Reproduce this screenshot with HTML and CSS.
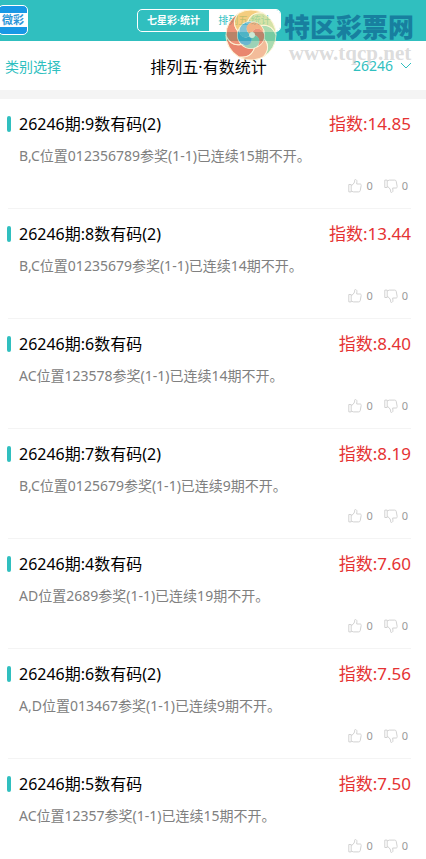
FILE: index.html
```
<!DOCTYPE html>
<html lang="zh-CN">
<head>
<meta charset="utf-8">
<meta name="viewport" content="width=device-width, initial-scale=1">
<title>排列五·有数统计</title>
<link rel="stylesheet" href="styles.css">
</head>
<body>
<svg class="sprite" aria-hidden="true">
  <symbol id="thumb" viewBox="0 0 14 14">
    <path d="M.8 5.5h2.4v7.4H.8zM3.2 6.6 5 5.4 6.6 3V1.3C6.6.7 7 .5 7.6.6c1 .2 1.4 1 1.3 2L8.7 5h3.2c1 0 1.5.6 1.3 1.5l-1 5.2c-.2.8-.7 1.2-1.5 1.2H5.4l-2.2-.8" fill="none" stroke="currentColor" stroke-linejoin="round"/>
  </symbol>
</svg>
<header class="topbar">
  <a class="logo" href="#" aria-label="首页"><span>微彩</span></a>
  <nav class="tabs">
    <a class="tab" href="#">七星彩·统计</a>
    <a class="tab tab-active" href="#">排列五·统计</a>
  </nav>
  <div class="watermark">
    <svg class="swirl" viewBox="0 0 52 52" aria-hidden="true">
      <defs>
        <path id="blade" d="M26 26C30 14 46 12 51 26A25 25 0 0 1 38.5 47.65C48.1 36.3 38.4 23.5 26 26Z"/>
        <path id="petal" d="M26 26C28 18 36 17 39 25C40 30 37 35 33 37C36 31 33 25 26 26Z"/>
      </defs>
      <g stroke="#fff3cd" stroke-width="1">
        <use href="#blade" fill="#8fcf97"/>
        <use href="#blade" fill="#efa679" transform="rotate(60 26 26)"/>
        <use href="#blade" fill="#e2603f" transform="rotate(120 26 26)"/>
        <use href="#blade" fill="#e9704b" transform="rotate(180 26 26)"/>
        <use href="#blade" fill="#f1bd55" transform="rotate(240 26 26)"/>
        <use href="#blade" fill="#c9d98a" transform="rotate(300 26 26)"/>
      </g>
      <circle cx="26" cy="26" r="14" fill="#f8efcb"/>
      <use href="#petal" fill="#e8714f"/>
      <use href="#petal" fill="#7cc3a0" transform="rotate(72 26 26)"/>
      <use href="#petal" fill="#3c9fc0" transform="rotate(144 26 26)"/>
      <use href="#petal" fill="#58b0c8" transform="rotate(216 26 26)"/>
      <use href="#petal" fill="#ee9a5e" transform="rotate(288 26 26)"/>
      <circle cx="27" cy="26" r="3" fill="#fff6dc"/>
    </svg>
    <p class="brand"><strong>特区彩票网</strong><span>www.tqcp.net</span></p>
  </div>
</header>
<div class="filters">
  <a class="category" href="#">类别选择</a>
  <h1>排列五·有数统计</h1>
  <button class="issue" type="button">26246
    <svg viewBox="0 0 12 8" aria-hidden="true"><path d="M1 1l5 5 5-5" fill="none" stroke="currentColor"/></svg>
  </button>
</div>
<main class="list" id="list"></main>
<script src="app.js"></script>
</body>
</html>
```
FILE: styles.css
```
* { box-sizing: border-box; }

body {
  margin: 0;
  background: #fff;
  color: #000;
  font-family: "Noto Sans", "Noto Sans CJK SC", sans-serif;
  font-size: 14px;
  overflow-x: hidden;
}

a { color: inherit; text-decoration: none; }
h1, h2, p { margin: 0; font-weight: 400; }
button { padding: 0; border: 0; background: none; color: inherit; font: inherit; }
.sprite { position: absolute; width: 0; height: 0; }

.topbar {
  position: relative;
  display: flex;
  align-items: center;
  justify-content: center;
  height: 41px;
  background: #30bfbf;
}

.logo {
  position: absolute;
  left: -2px;
  top: 5px;
  display: flex;
  align-items: center;
  width: 30px;
  height: 30px;
  border: 1px solid #fff;
  border-radius: 5px;
  background: #1898e5;
  overflow: hidden;
}

.logo span {
  width: 100%;
  height: 14px;
  background: #fff;
  color: #2f97d8;
  font-size: 11px;
  font-weight: 700;
  line-height: 13px;
  text-align: center;
}

.tabs {
  display: flex;
  height: 23px;
  margin-right: 8px;
  border: 1px solid #fff;
  border-radius: 5px;
  overflow: hidden;
}

.tab {
  width: 71px;
  color: #fff;
  font-size: 10px;
  font-weight: 700;
  line-height: 21px;
  text-align: center;
}

.tab-active { background: #fff; color: #30bfbf; font-weight: 400; }

.watermark {
  position: absolute;
  z-index: 1;
  top: 9px;
  right: 10px;
  display: flex;
  gap: 7px;
  pointer-events: none;
}

.swirl { width: 52px; height: 52px; opacity: 0.75; }
.brand { display: flex; flex-direction: column; width: 132px; }

.brand strong {
  color: #187f9f;
  font-family: "Noto Sans CJK SC", sans-serif;
  font-size: 26px;
  font-weight: 900;
  line-height: 34px;
  white-space: nowrap;
}

.brand span {
  color: rgba(165, 165, 165, 0.4);
  font-family: "Liberation Serif", serif;
  font-size: 21px;
  font-weight: 700;
  line-height: 20px;
  text-align: center;
}

.filters {
  display: grid;
  grid-template-columns: 1fr auto 1fr;
  align-items: center;
  height: 58px;
  padding: 0 14px 0 5px;
  border-bottom: 9px solid #f4f4f4;
}

.category, .issue { color: #30bfbf; }
.filters h1 { font-size: 16px; }
.issue { display: flex; align-items: center; justify-self: end; gap: 7px; }
.issue svg { width: 12px; height: 8px; }
.list { padding: 0 15px 0 8px; }

.item {
  height: 110px;
  padding-top: 12px;
  border-bottom: 1px solid #f4f4f4;
}

.item:last-child { height: auto; border-bottom: 0; }
.heading { display: flex; align-items: center; height: 26px; }

.heading::before {
  width: 4px;
  height: 16px;
  margin: 0 8px 0 -1px;
  border-radius: 2px;
  background: #30bfbf;
  content: "";
}

.heading h2 { flex: 1; font-size: 16px; line-height: 26px; }
.index { color: #e53333; font-size: 17px; line-height: 26px; }
.detail { padding-left: 11px; color: #808080; line-height: 20px; margin-top: 9px; }

.votes {
  display: flex;
  justify-content: flex-end;
  gap: 11px;
  margin: 12px 3px 0 0;
}

.vote {
  display: flex;
  align-items: center;
  gap: 4px;
  height: 16px;
  color: #999;
  font-size: 11px;
  line-height: 16px;
}

.vote svg { width: 14px; height: 14px; color: #d2d2d2; }
.down svg { transform: rotate(180deg) scaleX(-1); }
```
FILE: app.js
```
const rows = [
  ["9数有码(2)", "14.85", "B,C位置012356789参奖(1-1)已连续15期不开。"],
  ["8数有码(2)", "13.44", "B,C位置01235679参奖(1-1)已连续14期不开。"],
  ["6数有码", "8.40", "AC位置123578参奖(1-1)已连续14期不开。"],
  ["7数有码(2)", "8.19", "B,C位置0125679参奖(1-1)已连续9期不开。"],
  ["4数有码", "7.60", "AD位置2689参奖(1-1)已连续19期不开。"],
  ["6数有码(2)", "7.56", "A,D位置013467参奖(1-1)已连续9期不开。"],
  ["5数有码", "7.50", "AC位置12357参奖(1-1)已连续15期不开。"]
];
const icon = '<svg aria-hidden="true"><use href="#thumb"/></svg>';

document.getElementById("list").innerHTML = rows.map(([name, index, detail]) => `
  <article class="item">
    <div class="heading"><h2>26246期:${name}</h2><span class="index">指数:${index}</span></div>
    <p class="detail">${detail}</p>
    <div class="votes">
      <button class="vote" type="button" aria-label="赞 0">${icon}0</button>
      <button class="vote down" type="button" aria-label="踩 0">${icon}0</button>
    </div>
  </article>`).join("");
```
